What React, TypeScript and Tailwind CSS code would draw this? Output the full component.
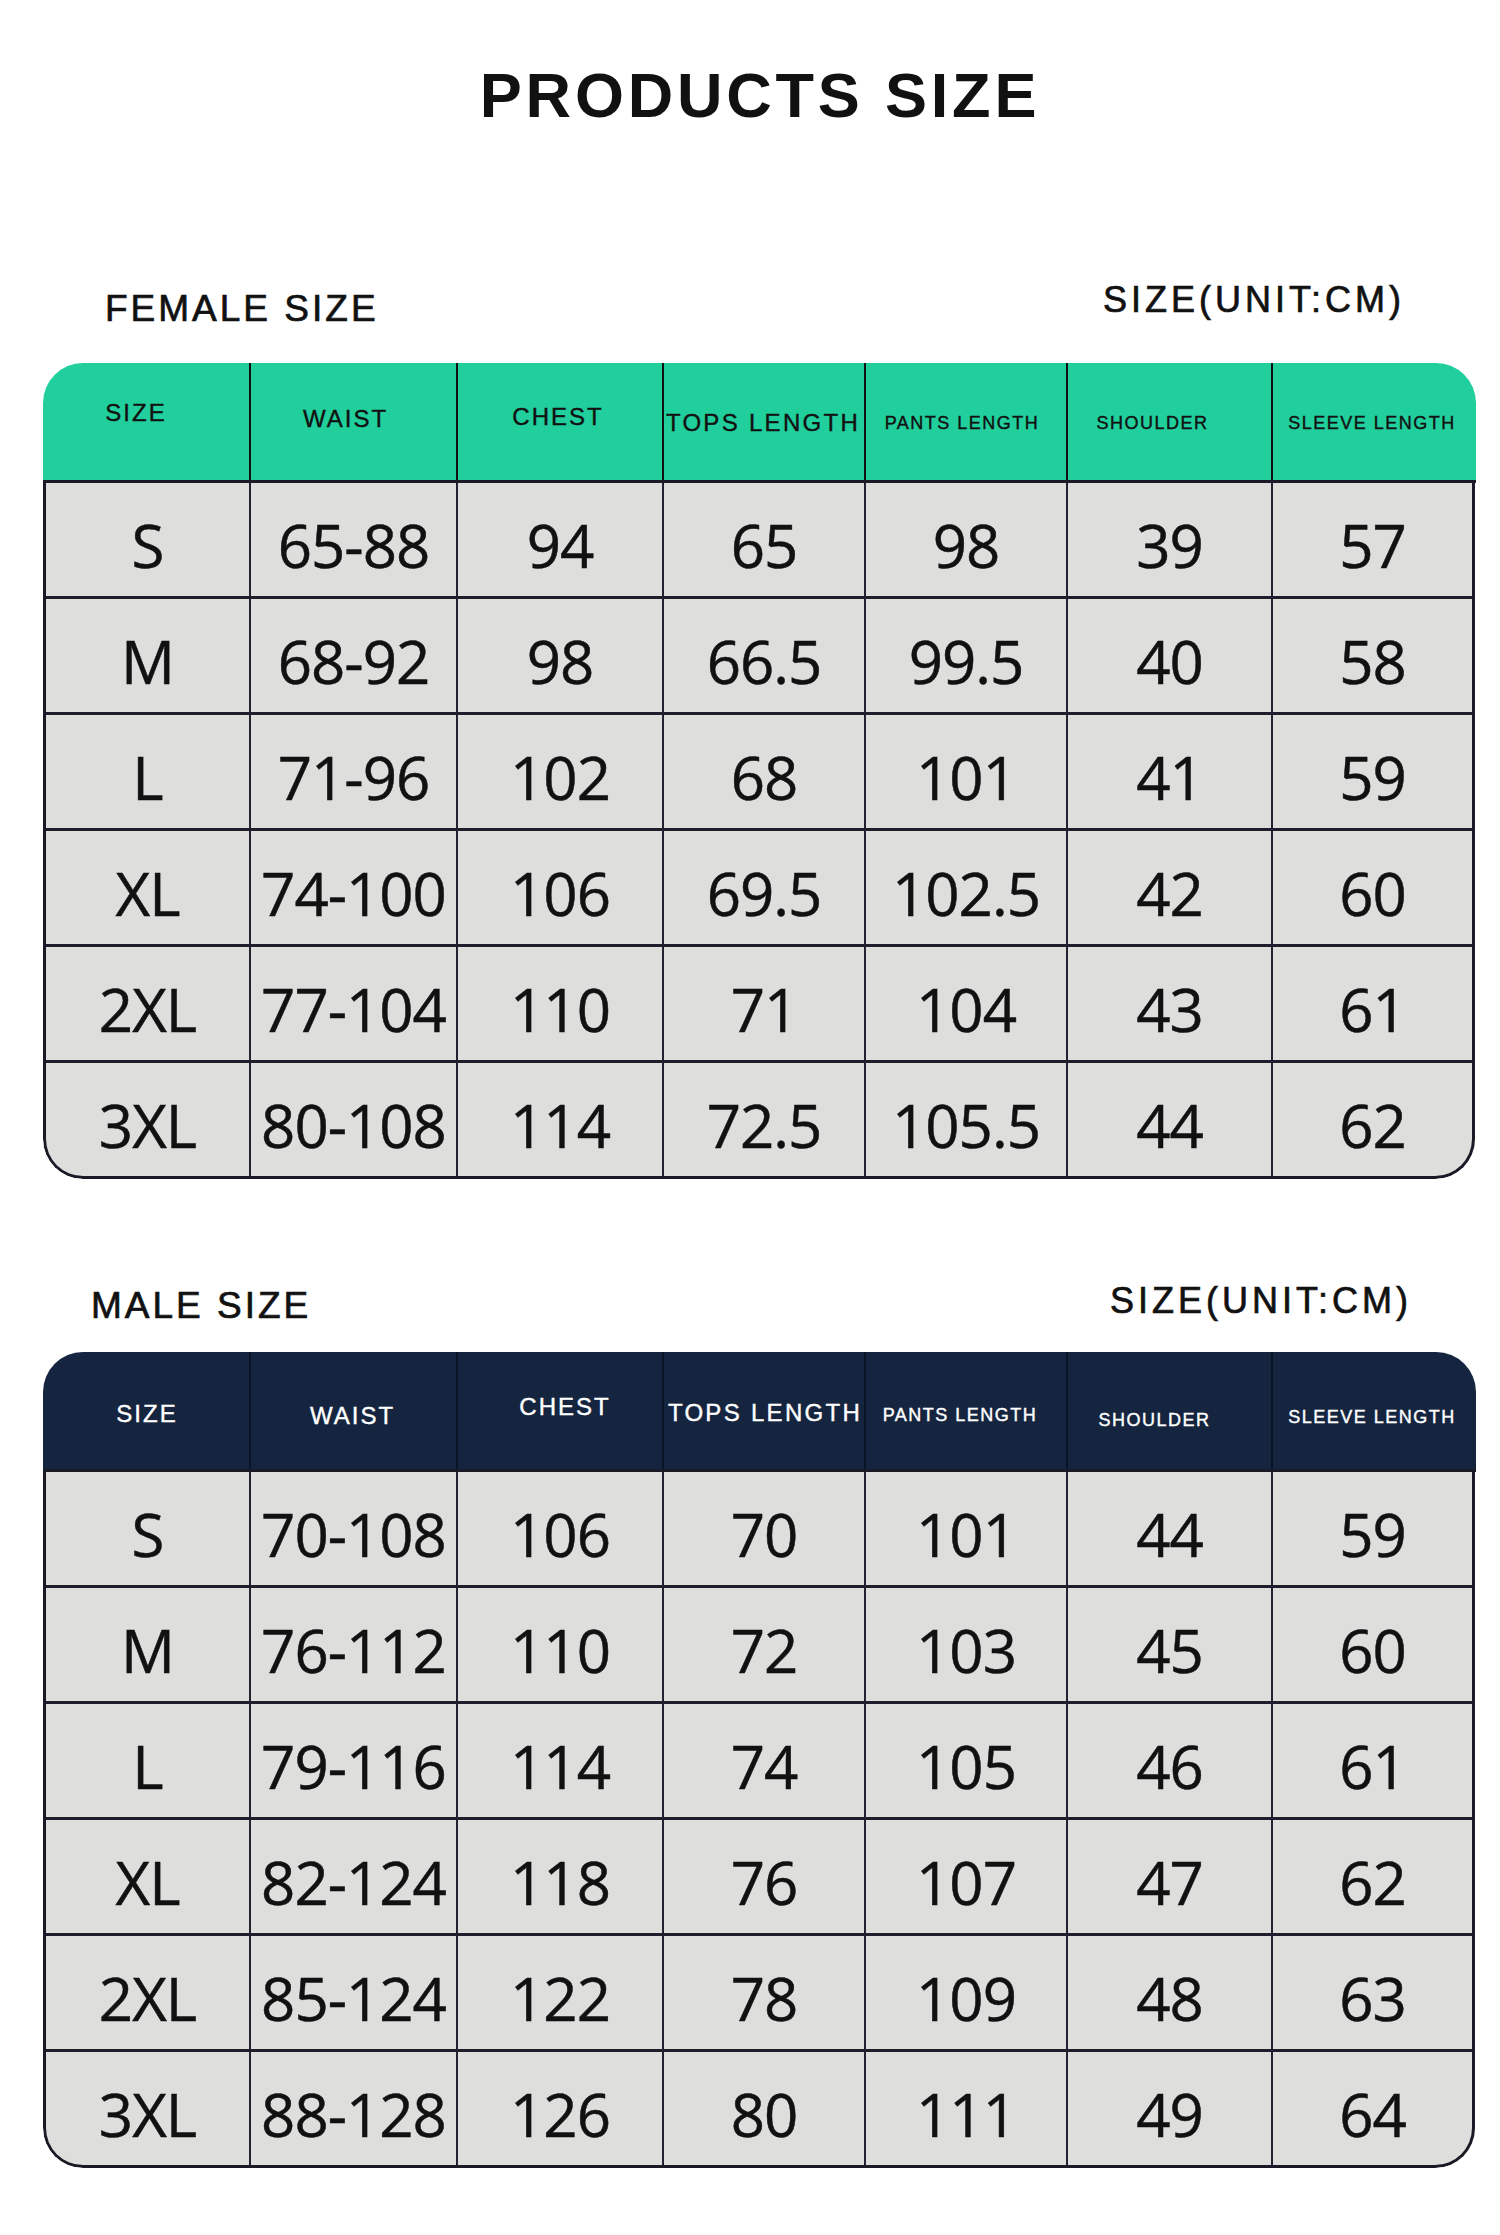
import React from "react";

const bodyCols = "grid grid-cols-[205px_207px_206px_202px_202px_205px_199px]";
const headCols = "grid grid-cols-[208px_207px_206px_202px_202px_205px_202px]";

const female = [
  ["S", "65-88", "94", "65", "98", "39", "57"],
  ["M", "68-92", "98", "66.5", "99.5", "40", "58"],
  ["L", "71-96", "102", "68", "101", "41", "59"],
  ["XL", "74-100", "106", "69.5", "102.5", "42", "60"],
  ["2XL", "77-104", "110", "71", "104", "43", "61"],
  ["3XL", "80-108", "114", "72.5", "105.5", "44", "62"],
];

const male = [
  ["S", "70-108", "106", "70", "101", "44", "59"],
  ["M", "76-112", "110", "72", "103", "45", "60"],
  ["L", "79-116", "114", "74", "105", "46", "61"],
  ["XL", "82-124", "118", "76", "107", "47", "62"],
  ["2XL", "85-124", "122", "78", "109", "48", "63"],
  ["3XL", "88-128", "126", "80", "111", "49", "64"],
];

const labels = ["SIZE", "WAIST", "CHEST", "TOPS LENGTH", "PANTS LENGTH", "SHOULDER", "SLEEVE LENGTH"];

const femaleLabelCls = [
  "text-[24px] tracking-[2px] -translate-x-[10px] -translate-y-[9px]",
  "text-[24px] tracking-[2px] -translate-x-[8px] -translate-y-[3px]",
  "text-[24px] tracking-[2px] -translate-x-[2px] -translate-y-[5px]",
  "text-[24px] tracking-[2.3px] -translate-x-[1px] translate-y-[1px]",
  "text-[18px] tracking-[1.5px] -translate-x-[4px] translate-y-[1px]",
  "text-[18px] tracking-[1.5px] -translate-x-[17px] translate-y-[1px]",
  "text-[18px] tracking-[1.5px] -translate-x-[2px] translate-y-[1px]",
];

const maleLabelCls = [
  "text-[24px] tracking-[2px] translate-x-[1px] translate-y-[3px]",
  "text-[24px] tracking-[2px] -translate-x-[1px] translate-y-[5px]",
  "text-[24px] tracking-[2px] translate-x-[5px] -translate-y-[4px]",
  "text-[24px] tracking-[2.3px] translate-x-[1px] translate-y-[2px]",
  "text-[18px] tracking-[1.5px] -translate-x-[6px] translate-y-[4px]",
  "text-[18px] tracking-[1.5px] -translate-x-[15px] translate-y-[9px]",
  "text-[18px] tracking-[1.5px] -translate-x-[2px] translate-y-[6px]",
];

function SizeTable({
  rows,
  headBg,
  headText,
  dividerCls,
  labelCls,
}: {
  rows: string[][];
  headBg: string;
  headText: string;
  dividerCls: string;
  labelCls: string[];
}) {
  return (
    <div className="ml-[43px] w-[1433px] rounded-[40px] overflow-hidden">
      <div className={`${headCols} ${headBg} h-[120px] border-b-[3px] border-[#1a1a26]`}>
        {labels.map((l, i) => (
          <div
            key={l}
            className={`flex items-center justify-center ${i < 6 ? `border-r-2 ${dividerCls}` : ""}`}
          >
            <span
              className={`${labelCls[i]} ${headText} font-['Liberation_Sans',Arial,sans-serif] leading-none whitespace-nowrap [-webkit-text-stroke:0.4px_currentColor]`}
            >
              {l}
            </span>
          </div>
        ))}
      </div>
      <div className="mr-[1px] bg-[#dededd] border-x-[3px] border-b-[3px] border-[#1a1a26] rounded-b-[40px]">
        {rows.map((r, ri) => (
          <div
            key={ri}
            className={`${bodyCols} ${ri < rows.length - 1 ? "h-[116px] border-b-[3px] border-[#1e1e2c]" : "h-[113px]"}`}
          >
            {r.map((c, ci) => (
              <div
                key={ci}
                className={`flex items-center justify-center pt-[10px] ${ci < 6 ? "border-r-2 border-[#222230]" : ""}`}
              >
                <span className="font-['Open_Sans','Noto_Sans',sans-serif] text-[60px] leading-none tracking-[-1px] text-[#111] [-webkit-text-stroke:0.5px_#111]">
                  {c}
                </span>
              </div>
            ))}
          </div>
        ))}
      </div>
    </div>
  );
}

export default function App() {
  return (
    <div className="w-[1500px] h-[2235px] bg-white overflow-hidden font-['Liberation_Sans',Arial,sans-serif] text-[#111]">
      <div className="pt-[64px] pl-[20px] flex justify-center">
        <h1 className="text-[63px] leading-none font-bold tracking-[3.8px]">PRODUCTS SIZE</h1>
      </div>

      <div className="mt-[155px] flex items-start h-[45px]">
        <div className="ml-[105px] mt-[8px] text-[37px] leading-none tracking-[3px] [-webkit-text-stroke:0.7px_#111]">
          FEMALE SIZE
        </div>
        <div className="ml-auto mr-[95px] text-[36px] leading-none tracking-[4px] [-webkit-text-stroke:0.7px_#111]">
          SIZE(UNIT:CM)
        </div>
      </div>

      <div className="mt-[36px]">
        <SizeTable
          rows={female}
          headBg="bg-[#21cf9d]"
          headText="text-[#111]"
          dividerCls="border-[#111]"
          labelCls={femaleLabelCls}
        />
      </div>

      <div className="mt-[104px] flex items-start h-[41px]">
        <div className="ml-[91px] mt-[4px] text-[37px] leading-none tracking-[3px] [-webkit-text-stroke:0.7px_#111]">
          MALE SIZE
        </div>
        <div className="ml-auto mr-[88px] text-[36px] leading-none tracking-[4px] [-webkit-text-stroke:0.7px_#111]">
          SIZE(UNIT:CM)
        </div>
      </div>

      <div className="mt-[28px]">
        <SizeTable
          rows={male}
          headBg="bg-[#152540]"
          headText="text-white"
          dividerCls="border-[#0a1426]"
          labelCls={maleLabelCls}
        />
      </div>
    </div>
  );
}
